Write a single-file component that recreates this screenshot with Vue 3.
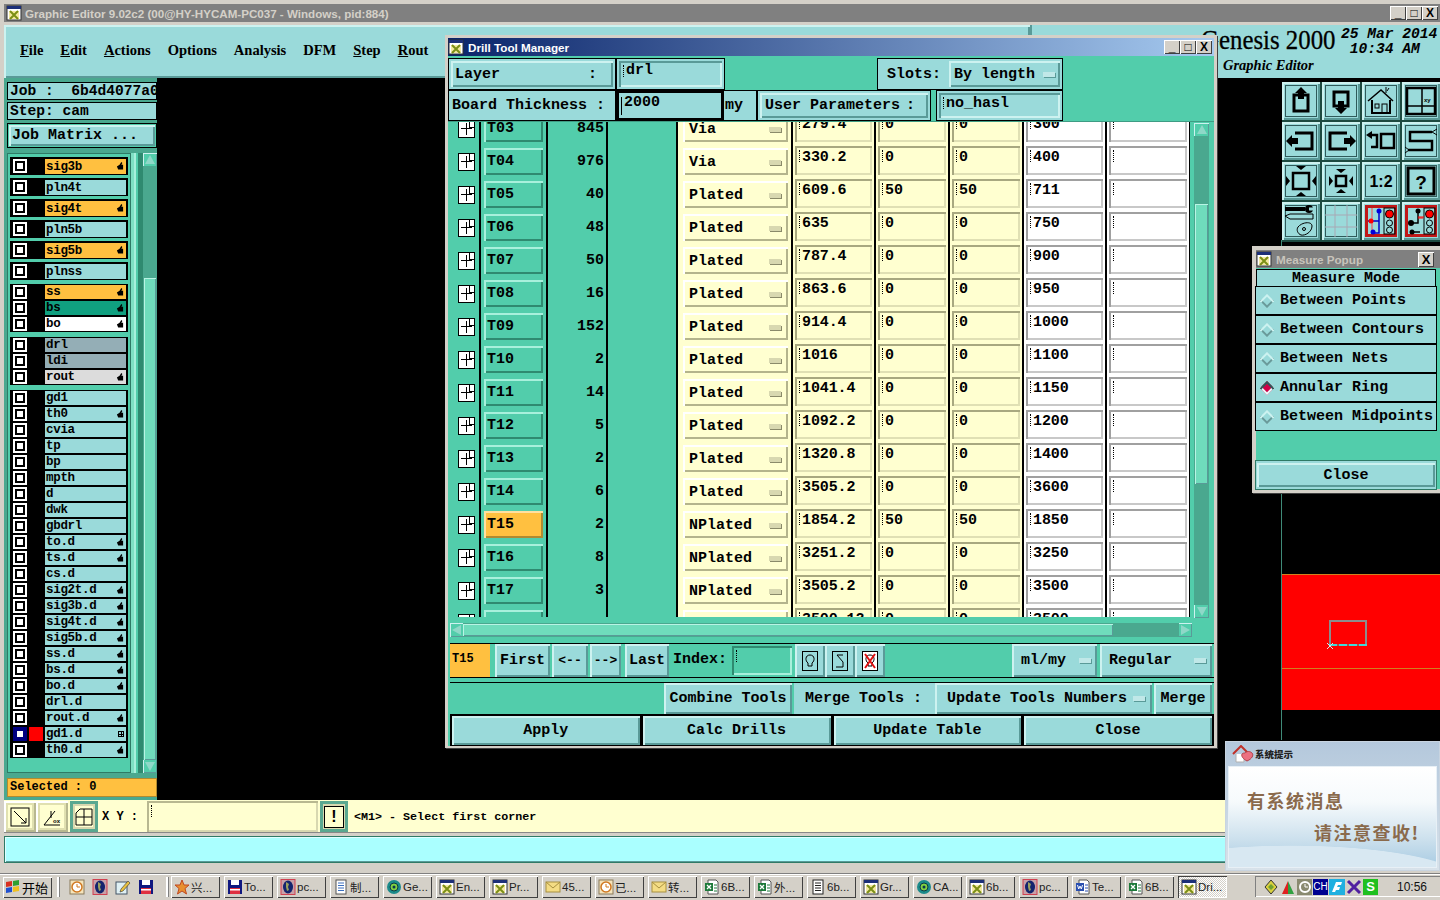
<template>
  <div class="desktop">
    <!-- icon sprite -->
    <svg class="sprite" width="0" height="0">
      <symbol id="xwin" viewBox="0 0 16 16">
        <rect x="1" y="1" width="14" height="14" fill="#fff" stroke="#333" />
        <rect x="1" y="1" width="14" height="3" fill="#1c2f78" />
        <rect x="3" y="6" width="10" height="8" fill="#f4e9a0" />
        <path d="M4 6l8 8M12 6l-8 8" stroke="#7b8f16" stroke-width="2" />
      </symbol>
      <symbol id="excel" viewBox="0 0 16 16">
        <path d="M4 1h8l2 2v12H4z" fill="#fff" stroke="#555" />
        <rect x="1" y="4" width="8" height="8" fill="#1d7a3a" />
        <path d="M3 6l4 4M7 6l-4 4" stroke="#fff" stroke-width="1.3" />
        <path d="M10 6h3M10 9h3M10 12h3" stroke="#1d7a3a" />
      </symbol>
      <symbol id="word" viewBox="0 0 16 16">
        <path d="M4 1h8l2 2v12H4z" fill="#fff" stroke="#555" />
        <rect x="1" y="4" width="8" height="8" fill="#2a4fb0" />
        <path d="M2.5 6l1.2 4 1.3-3 1.3 3 1.2-4" stroke="#fff" fill="none" />
        <path d="M10 6h3M10 9h3M10 12h3" stroke="#2a4fb0" />
      </symbol>
      <symbol id="globe" viewBox="0 0 16 16">
        <rect x="1" y="0.5" width="14" height="15" fill="#c8a0a8" stroke="#d04050" />
        <ellipse cx="8" cy="8" rx="5" ry="6.5" fill="#14246e" />
        <path d="M6 3l3 2-1 3 1 3-2 1-1-4z" fill="#9aa060" />
      </symbol>
      <symbol id="note" viewBox="0 0 16 16">
        <rect x="3" y="1" width="10" height="14" fill="#fff" stroke="#555" />
        <path d="M5 4h6M5 6.500h6M5 9h6M5 11.500h6" stroke="#3a6fc0" />
      </symbol>
      <symbol id="textfile" viewBox="0 0 16 16">
        <rect x="3" y="1" width="10" height="14" fill="#fff" stroke="#222" />
        <path d="M5 4h6M5 6.500h6M5 9h6M5 11.500h6" stroke="#222" />
      </symbol>
      <symbol id="mail" viewBox="0 0 16 16">
        <rect x="1" y="3" width="14" height="10" fill="#f4dc84" stroke="#a89040" />
        <path d="M1 3l7 6 7-6" fill="none" stroke="#a89040" />
      </symbol>
      <symbol id="clock" viewBox="0 0 16 16">
        <rect x="1" y="1" width="14" height="14" fill="#f5e4bc" stroke="#8a7a5a" />
        <circle cx="8" cy="8" r="5" fill="#fff" stroke="#d07820" stroke-width="1.500" />
        <path d="M8 5v3h3" stroke="#d07820" fill="none" />
      </symbol>
      <symbol id="floppy" viewBox="0 0 16 16">
        <rect x="1" y="1" width="14" height="14" fill="#101880" />
        <rect x="4" y="1" width="8" height="5" fill="#fff" />
        <rect x="3" y="9" width="10" height="6" fill="#e03040" />
        <rect x="3" y="10" width="10" height="1.500" fill="#fff" />
      </symbol>
      <symbol id="star" viewBox="0 0 16 16">
        <path d="M8 1l2 5h5l-4 3.500 1.500 5.500L8 12l-4.500 3L5 9.500 1 6h5z" fill="#e89030" stroke="#c04820" />
      </symbol>
      <symbol id="gear" viewBox="0 0 16 16">
        <circle cx="8" cy="8" r="7" fill="#1a8a8a" />
        <circle cx="8" cy="8" r="4" fill="#80d040" stroke="#0a3a4a" />
        <circle cx="8" cy="8" r="1.500" fill="#0a3a4a" />
      </symbol>
      <symbol id="pen" viewBox="0 0 16 16">
        <rect x="1" y="3" width="11" height="12" fill="#dff0f4" stroke="#456" />
        <path d="M6 10l7-8 2 2-7 8-3 1z" fill="#e8c040" stroke="#333" stroke-width=".6" />
      </symbol>
      <symbol id="hand" viewBox="0 0 9 9">
        <path d="M1 5l3-2 2-3 1.200 1L6 3h2v5.500H2.500z" fill="#000" />
      </symbol>
      <symbol id="p-upout" viewBox="3 3 32 32">
        <path d="M12 13h14v16H12z" fill="none" stroke="#000" stroke-width="3" />
        <path d="M19 5l6 6h-3v6h-6v-6h-3z" />
      </symbol>
      <symbol id="p-downin" viewBox="3 3 32 32">
        <path d="M12 10h14v14H12z" fill="none" stroke="#000" stroke-width="3" />
        <path d="M19 32l-6-6h3v-7h6v7h3z" />
      </symbol>
      <symbol id="p-home" viewBox="3 3 32 32">
        <path d="M6 19L19 8l12 11" fill="none" stroke="#000" stroke-width="1.500" />
        <path d="M10 18v13h18V18" fill="none" stroke="#000" stroke-width="2" />
        <rect x="13" y="22" width="4" height="4" fill="none" stroke="#000" />
        <rect x="20" y="22" width="5" height="9" fill="none" stroke="#000" />
        <path d="M24 11V5M27 6l-2 3" stroke="#000" />
      </symbol>
      <symbol id="p-xy" viewBox="3 3 32 32">
        <rect x="5" y="6" width="28" height="26" fill="none" stroke="#000" stroke-width="2.500" />
        <path d="M20 6v26M5 24h28" stroke="#000" stroke-width="1.500" />
      </symbol>
      <symbol id="p-left" viewBox="3 3 32 32">
        <path d="M13 11h17v16H13" fill="none" stroke="#000" stroke-width="3" />
        <path d="M4 19l6-6v3h6v6h-6v3z" />
      </symbol>
      <symbol id="p-right" viewBox="3 3 32 32">
        <path d="M25 11H8v16h17" fill="none" stroke="#000" stroke-width="3" />
        <path d="M34 19l-6-6v3h-6v6h6v3z" />
      </symbol>
      <symbol id="p-undo" viewBox="3 3 32 32">
        <rect x="19" y="12" width="13" height="14" fill="none" stroke="#000" stroke-width="2.500" />
        <path d="M9 13h6v12H9" fill="none" stroke="#000" stroke-width="2.500" />
        <path d="M4 13l6-4v8z" />
      </symbol>
      <symbol id="p-s" viewBox="3 3 32 32">
        <path d="M30 10H8v9h22v9H6" fill="none" stroke="#000" stroke-width="2.500" />
        <path d="M35 7l-5 3 5 3M3 25l4 3-4 3" fill="none" stroke="#000" />
      </symbol>
      <symbol id="p-fit" viewBox="3 3 32 32">
        <rect x="11" y="11" width="16" height="16" fill="none" stroke="#000" stroke-width="2.500" />
        <path d="M19 8l-5-4h10zM19 30l-5 4h10zM8 19l-4-5v10zM30 19l4-5v10z" />
      </symbol>
      <symbol id="p-zoom" viewBox="3 3 32 32">
        <rect x="14" y="14" width="10" height="10" fill="none" stroke="#000" stroke-width="2.500" />
        <path d="M19 11l-5-4h10zM19 27l-5 4h10zM11 19l-4-5v10zM27 19l4-5v10z" />
      </symbol>
      <symbol id="p-ratio" viewBox="3 3 32 32"></symbol>
      <symbol id="p-help" viewBox="3 3 32 32">
        <rect x="6" y="6" width="26" height="26" fill="none" stroke="#000" stroke-width="3" />
      </symbol>
      <symbol id="p-tool" viewBox="3 3 32 32">
        <path d="M3 6h20M3 8h20" stroke="#000" stroke-width="2" />
        <circle cx="27" cy="7" r="4" /><rect x="27" y="5.500" width="6" height="3" fill="#98d8d8" />
        <path d="M3 14l5-2h23v5H8z" fill="none" stroke="#000" />
        <path d="M16 25c4-5 14-6 14-1 0 6-7 10-11 9-3-1-5-5-3-8z" fill="none" stroke="#000" />
        <circle cx="22" cy="27" r="1.500" fill="none" stroke="#000" />
      </symbol>
      <symbol id="p-grid" viewBox="3 3 32 32">
        <path d="M3 13h32M3 25h32M13 3v32M25 3v32" stroke="#a8a8b4" />
      </symbol>
      <symbol id="p-net1" viewBox="0 0 32 32">
        <rect x="19" y="3" width="11" height="26" fill="none" stroke="#000" />
        <circle cx="24.500" cy="9" r="4" fill="#f00" stroke="#000" /><circle cx="24.500" cy="18" r="3" fill="none" stroke="#000" /><circle cx="24.500" cy="25" r="3" fill="none" stroke="#000" />
        <path d="M14 4v24H8M3 16h11" stroke="#00c" stroke-width="1.500" fill="none" /><path d="M7 3v26" stroke="#f44" />
        <circle cx="14" cy="6" r="2.500" fill="#00d" /><circle cx="8" cy="27" r="2.500" fill="#00d" /><circle cx="6" cy="16" r="2.500" fill="#f00" />
      </symbol>
      <symbol id="p-net2" viewBox="0 0 32 32">
        <rect x="19" y="3" width="11" height="26" fill="none" stroke="#000" />
        <circle cx="24.500" cy="9" r="4" fill="#f00" stroke="#000" /><circle cx="24.500" cy="18" r="3" fill="none" stroke="#000" /><circle cx="24.500" cy="25" r="3" fill="none" stroke="#000" />
        <path d="M13 4v14H7M7 27h8" stroke="#000" stroke-width="1.500" fill="none" /><path d="M13 13h5M14 11v2M16 11v2M18 11v2" stroke="#f00" />
        <circle cx="13" cy="6" r="2.500" /><circle cx="6" cy="18" r="3" /><circle cx="7" cy="27" r="2.500" />
      </symbol>
    </svg>

    <div class="frame">
      <div class="main-title">
        <svg class="ico16"><use href="#xwin" /></svg>
        <span>Graphic Editor 9.02c2 (00@HY-HYCAM-PC037 - Windows, pid:884)</span>
        <div class="win-btns">
          <span class="win-btn">_</span><span class="win-btn">□</span><span class="win-btn">X</span>
        </div>
      </div>

      <div class="top-band">
        <div class="menu-bar">
          <span v-for="m in menus" :key="m.label" class="menu-item" :class="{ u: m.u }">{{ m.label }}</span>
        </div>
        <div class="brand">
          <div class="brand-top">
            <span class="brand-name">Genesis 2000</span>
            <span class="brand-date">25 Mar 2014<br />&nbsp;10:34 AM</span>
          </div>
          <div class="brand-sub">Graphic Editor</div>
        </div>
      </div>

      <div class="middle">
        <aside class="left-panel">
          <div class="info-row">Job :&nbsp;&nbsp;6b4d4077a0</div>
          <div class="info-row">Step: cam</div>
          <div class="matrix-box"><div class="btn matrix-btn">Job Matrix ...</div></div>
          <div class="list-wrap">
            <div class="layer-list">
              <div v-for="(group, gi) in layerGroups" :key="gi" class="layer-group" :class="{ spaced: group.spaced, 'after-spaced': group.first }">
                <div v-for="l in group.rows" :key="l.name" class="layer-row">
                  <span class="check" :class="{ active: l.active }"></span>
                  <span class="swatch" :class="{ on: l.active }"></span>
                  <span class="layer-label" :class="l.tone">
                    {{ l.name }}
                    <svg v-if="l.hand" class="hand"><use href="#hand" /></svg>
                    <span v-if="l.grid" class="mini-grid"></span>
                  </span>
                </div>
              </div>
            </div>
            <div class="list-strip"></div>
            <div class="vscroll list-scroll">
              <span class="arrow-up"></span>
              <span class="vtrack"><span class="vthumb list-thumb"></span></span>
              <span class="arrow-down"></span>
            </div>
          </div>
          <div class="selected">Selected : 0</div>
        </aside>

        <main class="canvas">
          <div class="palette">
            <div v-for="p in palette" :key="p.id" class="pal-btn">
              <span class="pal-inner" :class="{ red: p.red }">
                <svg class="pal-ico" viewBox="0 0 32 32">
                  <use :href="'#' + p.id" />
                  <text v-if="p.text" :x="p.x" :y="p.y" :font-size="p.size" :text-anchor="p.anchor" class="pal-text">{{ p.text }}</text>
                </svg>
              </span>
            </div>
          </div>
          <div class="board-line"></div>
          <div class="board">
            <div class="board-mark"></div>
            <div class="board-cut"></div>
            <svg class="board-x" width="8" height="8" viewBox="0 0 8 8"><path d="M1 1l6 6M7 1L1 7" stroke="#d8e8e8" /></svg>
          </div>
        </main>
      </div>

      <div class="xy-bar">
        <span class="xy-btn">
          <svg width="20" height="20" viewBox="0 0 20 20"><rect x="1" y="1" width="18" height="18" fill="none" stroke="#000" /><path d="M4 4l12 12M16 11v5h-5" fill="none" stroke="#000" /></svg>
        </span>
        <span class="xy-btn">
          <svg width="20" height="20" viewBox="0 0 20 20"><path d="M2 18L13 4M2 18h16M9 4v7" fill="none" stroke="#000" /><text x="11" y="16" font-size="6" font-family="Liberation Sans, sans-serif">ox</text></svg>
        </span>
        <span class="xy-btn teal-frame">
          <svg width="18" height="18" viewBox="0 0 18 18"><path d="M1 17V5l4-4h12v16zM9 1v16M1 9h16" fill="none" stroke="#000" /></svg>
        </span>
        <span class="xy-label">X Y :</span>
        <span class="xy-input"><i class="caret"></i></span>
        <span class="xy-btn teal-frame bang"><span class="bang-box">!</span></span>
        <span class="xy-msg">&lt;M1&gt; - Select first corner</span>
      </div>
      <div class="msg-bar"></div>
    </div>

    <div class="taskbar">
      <div class="start-btn">
        <svg width="16" height="16" viewBox="0 0 16 16"><path d="M1 3l6-1v5l-6 1z" fill="#d83020" /><path d="M8 2l6-1v5l-6 1z" fill="#30a030" /><path d="M1 9l6-1v5l-6 1z" fill="#2050d0" /><path d="M8 8l6-1v5l-6 1z" fill="#f0c020" /></svg>
        <span>开始</span>
      </div>
      <span class="grip"></span>
      <div class="quick">
        <svg class="ico16"><use href="#clock" /></svg>
        <svg class="ico16"><use href="#globe" /></svg>
        <svg class="ico16"><use href="#pen" /></svg>
        <svg class="ico16"><use href="#floppy" /></svg>
      </div>
      <span class="grip"></span>
      <div class="tasks">
        <div v-for="(t, i) in tasks" :key="i" class="task" :class="{ current: t.current }">
          <svg class="ico16"><use :href="'#' + t.icon" /></svg>
          <span>{{ t.label }}</span>
        </div>
      </div>
      <div class="tray">
        <svg class="tray-ico" viewBox="0 0 16 16"><path d="M8 1l6 7-6 7-6-7z" fill="#d8d040" stroke="#333" /><path d="M5 8l3-3 3 3-3 3z" fill="#70a030" /></svg>
        <svg class="tray-ico" viewBox="0 0 16 16"><path d="M8 2L2 15h6z" fill="#e02020" /><path d="M8 2l6 13H8z" fill="#30a040" /></svg>
        <span class="tray-box grey">
          <svg width="14" height="14" viewBox="0 0 14 14"><circle cx="7" cy="7" r="5" fill="none" stroke="#fff" stroke-width="2" /><path d="M7 4v3h3" stroke="#fff" fill="none" /></svg>
        </span>
        <span class="tray-box ch">CH</span>
        <svg class="tray-ico" viewBox="0 0 16 16"><rect width="16" height="16" fill="#20b0e0" /><path d="M3 13l4-10h6l-1 3H9l-1 2h3l-1 3H7l-1 2z" fill="#fff" /></svg>
        <svg class="tray-ico" viewBox="0 0 16 16"><path d="M2 2l12 12M14 2L2 14" stroke="#5020a0" stroke-width="3" /></svg>
        <span class="tray-box tray-s">S</span>
        <span class="clock">10:56</span>
      </div>
    </div>

    <!-- Drill Tool Manager -->
    <section class="win drill">
      <header class="win-title active-title">
        <svg class="ico16"><use href="#xwin" /></svg>
        <span>Drill Tool Manager</span>
        <div class="win-btns">
          <span class="win-btn">_</span><span class="win-btn">□</span><span class="win-btn">X</span>
        </div>
      </header>
      <div class="drill-body">
        <div class="d-row r1">
          <div class="boxed layer-btn"><span class="btn layer-inner"><b>Layer</b><b>:</b></span></div>
          <div class="boxed layer-field"><span class="field"><i class="caret"></i>drl</span></div>
          <div class="boxed slots">
            <span class="slots-lbl">Slots:</span>
            <span class="btn sel slots-sel">By length<i class="ind"></i></span>
          </div>
        </div>
        <div class="d-row r2">
          <div class="boxed board-lbl">Board Thickness :</div>
          <div class="boxed thick-field"><span class="field focused"><i class="caret big"></i>2000</span></div>
          <div class="boxed my">my</div>
          <div class="boxed user-wrap"><span class="btn user-btn"><b>User Parameters</b><b>:</b></span></div>
          <div class="boxed user-field"><span class="field"><i class="caret"></i>no_hasl</span></div>
        </div>

        <div class="table-area">
          <div class="table-clip">
            <div class="tool-table">
              <div v-for="r in tools" :key="r.dia" class="tool-row">
                <div class="c-ico">
                  <span class="plus-box"></span>
                </div>
                <div class="c-id"><span class="id-btn" :class="{ hot: r.id === 'T15' }">{{ r.id }}</span></div>
                <div class="c-count">{{ r.count }}</div>
                <div class="c-empty"></div>
                <div class="c-type"><span class="type-btn">{{ r.type }}<i class="ind"></i></span></div>
                <div class="c-in cream"><span class="in-box"><i class="caret"></i>{{ r.dia }}</span></div>
                <div class="c-in cream"><span class="in-box"><i class="caret"></i>{{ r.a }}</span></div>
                <div class="c-in cream"><span class="in-box"><i class="caret"></i>{{ r.b }}</span></div>
                <div class="c-in white-cell"><span class="in-box"><i class="caret"></i>{{ r.fin }}</span></div>
                <div class="c-in white-cell"><span class="in-box"><i class="caret"></i></span></div>
              </div>
            </div>
          </div>
          <div class="vscroll table-scroll">
            <span class="arrow-up"></span>
            <span class="vtrack"><span class="vthumb table-thumb"></span></span>
            <span class="arrow-down"></span>
          </div>
        </div>

        <div class="hscroll">
          <span class="arrow-left"></span>
          <span class="htrack"><span class="hthumb"></span></span>
          <span class="arrow-right"></span>
        </div>

        <div class="nav-row">
          <span class="cur-tool">T15</span>
          <span class="btn nav-first">First</span>
          <span class="btn nav-arrow">&lt;--</span>
          <span class="btn nav-arrow2">--&gt;</span>
          <span class="btn nav-last">Last</span>
          <span class="index-lbl">Index:</span>
          <span class="index-in"><i class="caret"></i></span>
          <span class="btn nav-ico">
            <svg width="16" height="20" viewBox="0 0 16 20"><rect x=".5" y=".5" width="15" height="19" fill="none" stroke="#000" /><path d="M6 15V12C3 10 3 4 8 4s5 6 2 8v3z" fill="none" stroke="#000" /></svg>
          </span>
          <span class="btn nav-ico">
            <svg width="16" height="20" viewBox="0 0 16 20"><rect x=".5" y=".5" width="15" height="19" fill="none" stroke="#000" /><path d="M11 4H5l6 7v5H4" fill="none" stroke="#000" /></svg>
          </span>
          <span class="btn nav-ico">
            <svg width="16" height="20" viewBox="0 0 16 20"><rect x=".5" y=".5" width="15" height="19" fill="#fff" stroke="#000" /><path d="M6 15V12C3 10 3 4 8 4s5 6 2 8v3z" fill="none" stroke="#000" /><path d="M3 3l10 14M13 3L3 17" stroke="#e01010" stroke-width="2" /></svg>
          </span>
          <span class="nav-gap"></span>
          <span class="btn sel nav-unit">ml/my<i class="ind"></i></span>
          <span class="btn sel nav-reg">Regular<i class="ind"></i></span>
        </div>

        <div class="merge-row">
          <span class="merge-gap"></span>
          <span class="btn combine">Combine Tools</span>
          <span class="merge-lbl">Merge Tools :</span>
          <span class="btn sel merge-sel">Update Tools Numbers<i class="ind"></i></span>
          <span class="btn merge-btn">Merge</span>
        </div>

        <div class="action-row">
          <span v-for="a in actions" :key="a" class="btn action">{{ a }}</span>
        </div>
      </div>
    </section>

    <!-- Measure popup -->
    <section class="win measure">
      <header class="win-title idle-title">
        <svg class="ico16"><use href="#xwin" /></svg>
        <span>Measure Popup</span>
        <div class="win-btns"><span class="win-btn">X</span></div>
      </header>
      <div class="measure-body">
        <div class="mode-head">Measure Mode</div>
        <div v-for="m in modes" :key="m.label" class="mode-row">
          <i class="diamond" :class="{ on: m.on }"></i>{{ m.label }}
        </div>
        <div class="mode-gap"></div>
        <div class="mode-close"><span class="btn">Close</span></div>
      </div>
    </section>

    <!-- system notice -->
    <section class="notice">
      <div class="notice-head">
        <svg width="22" height="18" viewBox="0 0 22 18"><path d="M1 9l8-8 8 8" fill="none" stroke="#c03028" stroke-width="2" /><path d="M4 9v8h8V9" fill="#fff" stroke="#b0b0b0" /><path d="M13 8c2-2 5-2 7 0s0 6-5 8c-4-2-6-5-5-7 1-1 2-1 3-1z" fill="#ec7080" stroke="#b04048" /></svg>
        <span>系统提示</span>
      </div>
      <div class="notice-body">
        <div class="notice-l1">有系统消息</div>
        <div class="notice-l2">请注意查收!</div>
      </div>
    </section>
  </div>
</template>

<script setup>
// u = first letter underlined, as the mnemonic in the original menu
const menus = [
  { label: 'File', u: true }, { label: 'Edit', u: true }, { label: 'Actions', u: true },
  { label: 'Options' }, { label: 'Analysis' }, { label: 'DFM' },
  { label: 'Step', u: true }, { label: 'Rout', u: true }, { label: 'View', u: true },
]

// layer matrix column: tone is the label colour, hand the little pointer at the right
const mk = (name, tone = '', hand = false, extra = {}) => ({ name, tone, hand, ...extra })
const layerGroups = [
  { spaced: true, rows: [mk('sig3b', 'orange', true)] },
  { spaced: true, rows: [mk('pln4t')] },
  { spaced: true, rows: [mk('sig4t', 'orange', true)] },
  { spaced: true, rows: [mk('pln5b')] },
  { spaced: true, rows: [mk('sig5b', 'orange', true)] },
  { spaced: true, rows: [mk('plnss')] },
  { first: true, rows: [mk('ss', 'orange', true), mk('bs', 'green', true), mk('bo', 'white', true)] },
  { rows: [mk('drl', 'slate'), mk('ldi', 'slate'), mk('rout', 'pale', true)] },
  {
    rows: [
      mk('gd1'), mk('th0', '', true), mk('cvia'), mk('tp'), mk('bp'), mk('mpth'), mk('d'), mk('dwk'), mk('gbdrl'),
      mk('to.d', '', true), mk('ts.d', '', true), mk('cs.d'), mk('sig2t.d', '', true), mk('sig3b.d', '', true),
      mk('sig4t.d', '', true), mk('sig5b.d', '', true), mk('ss.d', '', true), mk('bs.d', '', true), mk('bo.d', '', true),
      mk('drl.d'), mk('rout.d', '', true), mk('gd1.d', '', false, { active: true, grid: true }), mk('th0.d', '', true),
    ],
  },
]

const palette = [
  { id: 'p-upout' }, { id: 'p-downin' }, { id: 'p-home' },
  { id: 'p-xy', text: 'xy', x: 19, y: 17, size: 6 },
  { id: 'p-left' }, { id: 'p-right' }, { id: 'p-undo' }, { id: 'p-s' },
  { id: 'p-fit' }, { id: 'p-zoom' },
  { id: 'p-ratio', text: '1:2', x: 16, y: 22, size: 16, anchor: 'middle' },
  { id: 'p-help', text: '?', x: 16, y: 24, size: 19, anchor: 'middle' },
  { id: 'p-tool' }, { id: 'p-grid' }, { id: 'p-net1', red: true }, { id: 'p-net2', red: true },
]

const row = (id, count, type, dia, fin, a = '0', b = '0') => ({ id, count, type, dia, fin, a, b })
const tools = [
  row('T03', 845, 'Via', '279.4', '300'),
  row('T04', 976, 'Via', '330.2', '400'),
  row('T05', 40, 'Plated', '609.6', '711', '50', '50'),
  row('T06', 48, 'Plated', '635', '750'),
  row('T07', 50, 'Plated', '787.4', '900'),
  row('T08', 16, 'Plated', '863.6', '950'),
  row('T09', 152, 'Plated', '914.4', '1000'),
  row('T10', 2, 'Plated', '1016', '1100'),
  row('T11', 14, 'Plated', '1041.4', '1150'),
  row('T12', 5, 'Plated', '1092.2', '1200'),
  row('T13', 2, 'Plated', '1320.8', '1400'),
  row('T14', 6, 'Plated', '3505.2', '3600'),
  row('T15', 2, 'NPlated', '1854.2', '1850', '50', '50'),
  row('T16', 8, 'NPlated', '3251.2', '3250'),
  row('T17', 3, 'NPlated', '3505.2 ', '3500'),
  row('', '', '', '3500.12', '3500'),
]

const actions = ['Apply', 'Calc Drills', 'Update Table', 'Close']

const modes = [
  { label: 'Between Points' },
  { label: 'Between Contours' },
  { label: 'Between Nets' },
  { label: 'Annular Ring', on: true },
  { label: 'Between Midpoints' },
]

const tasks = [
  { icon: 'star', label: '兴...' }, { icon: 'floppy', label: 'To...' }, { icon: 'globe', label: 'pc...' },
  { icon: 'note', label: '制...' }, { icon: 'gear', label: 'Ge...' }, { icon: 'xwin', label: 'En...' },
  { icon: 'xwin', label: 'Pr...' }, { icon: 'mail', label: '45...' }, { icon: 'clock', label: '已...' },
  { icon: 'mail', label: '转...' }, { icon: 'excel', label: '6B...' }, { icon: 'excel', label: '外...' },
  { icon: 'textfile', label: '6b...' }, { icon: 'xwin', label: 'Gr...' }, { icon: 'gear', label: 'CA...' },
  { icon: 'xwin', label: '6b...' }, { icon: 'globe', label: 'pc...' }, { icon: 'word', label: 'Te...' },
  { icon: 'excel', label: '6B...' }, { icon: 'xwin', label: 'Dri...', current: true },
]
</script>

<style>
html, body { margin: 0; background: #000; }
</style>

<style scoped>
.desktop {
  --teal: #9adada;
  --green: #52cdab;
  --dark: #4aa88f;
  --hi: #cdf2f0;
  --lo: #5a9a98;
  --cream: #ffffd0;
  --orange: #ffc040;
  --mono: "Liberation Mono", "DejaVu Sans Mono", monospace;
  --serif: "Liberation Serif", serif;
  --ui: "Liberation Sans", "Noto Sans CJK SC", sans-serif;
  position: relative;
  width: 1440px;
  height: 900px;
  overflow: hidden;
  display: flex;
  flex-direction: column;
  background: #d4d0c8;
  font-family: var(--mono);
  font-weight: 700;
  color: #000;
}
.sprite { position: absolute; }
.ico16 { width: 16px; height: 16px; flex: none; }

.frame {
  height: 874px;
  box-sizing: border-box;
  padding: 4px 0 10px 4px;
  display: flex;
  flex-direction: column;
  background: #d4d0c8;
  border-bottom: 1px solid #808080;
}

.main-title {
  height: 18px;
  display: flex;
  align-items: center;
  gap: 3px;
  padding-left: 2px;
  background: #808080;
  color: #d4d0c8;
  font: 700 11.600px var(--ui);
  margin-bottom: 3px;
}
.win-btns { margin-left: auto; display: flex; padding-right: 2px; }
.win-btn {
  width: 16px;
  height: 14px;
  background: #d4d0c8;
  color: #000;
  font: 700 12px/14px var(--ui);
  text-align: center;
  box-shadow: inset 1px 1px 0 #fff, inset -1px -1px 0 #404040;
}

.top-band {
  height: 53px;
  display: flex;
  background: var(--teal);
}
.menu-bar {
  width: 1026px;
  box-sizing: border-box;
  display: flex;
  gap: 17px;
  padding: 15px 0 0 16px;
  box-shadow: inset 2px 2px 0 var(--hi), inset -2px -2px 0 var(--lo);
  overflow: hidden;
}
.menu-item {
  font: 700 14.500px var(--serif);
  line-height: 20px;
  height: 20px;
}
.menu-item.u::first-letter { text-decoration: underline; }
.brand {
  flex: 1;
  border-left: 2px solid var(--lo);
  padding: 2px 0 0 173px;
  white-space: nowrap;
}
.brand-top { display: flex; gap: 9px; margin-left: -4px; }
.brand-name {
  font: 400 27px/27px var(--serif);
  -webkit-text-stroke: .3px #000;
  transform: scaleX(.92);
  transform-origin: left;
  width: 131px;
}
.brand-date { font: italic 700 14.600px/15px var(--mono); }
.brand-sub { font: italic 700 14.500px/18px var(--serif); margin: -1px 0 0 18px; }

.middle { flex: 1; display: flex; min-height: 0; }
.left-panel {
  width: 153px;
  box-sizing: border-box;
  padding: 4px 0 0 3px;
  background: var(--dark);
  display: flex;
  flex-direction: column;
}
.info-row {
  height: 18px;
  box-sizing: border-box;
  border: 1px solid #000;
  background: var(--teal);
  font-size: 14.600px;
  line-height: 17px;
  padding-left: 2px;
  white-space: nowrap;
  margin-bottom: 2px;
}
.matrix-box {
  height: 25px;
  box-sizing: border-box;
  margin-top: 1px;
  border: 1px solid #000;
  padding: 1px;
  background: var(--green);
}
.btn {
  display: flex;
  align-items: center;
  justify-content: center;
  box-sizing: border-box;
  background: var(--teal);
  box-shadow: inset 2px 2px 0 var(--hi), inset -2px -2px 0 var(--lo);
  font-size: 15px;
  white-space: nowrap;
}
.matrix-btn { height: 21px; justify-content: flex-start; padding-left: 3px; }

.list-wrap { flex: 1; display: flex; margin-top: 5px; min-height: 0; background: var(--green); }
.layer-list {
  width: 124px;
  box-sizing: border-box;
  padding: 4px 3px 0 3px;
  display: flex;
  flex-direction: column;
  gap: 5px;
  background: var(--green);
  box-shadow: inset 0 0 0 1px #2f7a66;
}
.layer-group.spaced { margin-bottom: -2px; }
.layer-group.after-spaced { margin-top: 1px; }
.layer-group { background: #000; }
.layer-row {
  height: 16px;
  display: flex;
  align-items: center;
  padding: 0 2px 0 3px;
}
.spaced .layer-row { height: 18px; }
.check {
  position: relative;
  width: 14px;
  height: 14px;
  flex: none;
  background: #fff;
}
.check::after {
  content: "";
  position: absolute;
  inset: 2px;
  border: 2px solid #000;
  background: #fff;
}
.check.active { outline: 2px solid #000080; outline-offset: -2px; }
.check.active::after { border-color: #000080; }
.swatch { width: 14px; height: 14px; margin: 0 2px 0 2px; flex: none; }
.swatch.on { background: #f00; }
.layer-label {
  position: relative;
  width: 81px;
  height: 14px;
  box-sizing: border-box;
  padding-left: 1px;
  background: var(--teal);
  font-size: 12.500px;
  line-height: 15px;
  letter-spacing: -.3px;
}
.spaced .layer-label { height: 15px; line-height: 17px; }
.orange { background: var(--orange); }
.green { background: #10a080; }
.white { background: #fff; }
.slate { background: #94aeb6; }
.pale { background: #dcdcdc; }
.hand { position: absolute; right: 2px; top: 3px; width: 8px; height: 8px; }
.mini-grid {
  position: absolute;
  right: 2px;
  top: 4px;
  width: 6px;
  height: 6px;
  border: 1px solid #000;
  background: linear-gradient(#000, #000) center / 100% 1px no-repeat, linear-gradient(#000, #000) center / 1px 100% no-repeat;
  box-sizing: border-box;
}
.list-strip {
  width: 12px;
  background: linear-gradient(90deg, #7fe0c4 0 3px, #a8f0dc 3px 5px, #52cdab 5px 7px, #2f8a70 7px 12px);
}

.vscroll {
  display: flex;
  flex-direction: column;
  align-items: center;
  background: var(--green);
  box-shadow: inset 1px 1px 0 var(--hi), inset -1px -1px 0 var(--lo);
}
.list-scroll { width: 14px; }
.vtrack { flex: 1; width: 100%; background: var(--dark); position: relative; }
.vthumb {
  position: absolute;
  left: 1px;
  right: 1px;
  background: #6fdcbc;
  box-shadow: inset 1px 1px 0 #b8f4e4, inset -1px -1px 0 var(--lo);
}
.list-thumb { top: 112px; bottom: 0; }
.table-thumb { top: 68px; height: 280px; }
.arrow-up, .arrow-down, .arrow-left, .arrow-right { width: 0; height: 0; flex: none; margin: 2px; border-style: solid; border-color: transparent; }
.arrow-up { border-width: 0 5px 9px; border-bottom-color: #8fd8c8; }
.arrow-down { border-width: 9px 5px 0; border-top-color: #8fd8c8; }
.arrow-left { border-width: 5px 9px 5px 0; border-right-color: #8fd8c8; }
.arrow-right { border-width: 5px 0 5px 9px; border-left-color: #8fd8c8; }

.selected {
  height: 19px;
  margin: 5px 0 3px;
  padding-left: 3px;
  background: var(--orange);
  font-size: 12px;
  line-height: 18px;
  box-shadow: inset 0 0 0 1px #b08a30;
}

.canvas { flex: 1; position: relative; background: #000; }
.palette {
  position: absolute;
  right: 0;
  top: 4px;
  width: 158px;
  display: grid;
  grid-template-columns: repeat(4, 38px);
  grid-auto-rows: 38px;
  gap: 2px;
  padding: 0 0 2px 0;
  background: #1d4a40;
}
.pal-btn {
  display: flex;
  padding: 3px;
  box-sizing: border-box;
  background: var(--teal);
  box-shadow: inset 2px 2px 0 var(--hi), inset -2px -2px 0 var(--lo);
}
.pal-inner { flex: 1; display: flex; box-shadow: inset 1px 1px 0 #2f5a5a, inset -1px -1px 0 #2f5a5a; }
.pal-inner.red { box-shadow: inset 0 0 0 3px #c01818; }
.pal-ico { width: 100%; height: 100%; }
.pal-text { font-family: "Liberation Sans", sans-serif; font-weight: 700; }
.board-line {
  position: absolute;
  left: 1124px;
  top: 162px;
  width: 1px;
  height: 500px;
  background: #3f8a78;
}
.board {
  position: absolute;
  left: 1125px;
  top: 496px;
  width: 158px;
  height: 136px;
  background: #f00;
  border-top: 1px solid #d08020;
  box-sizing: border-box;
}
.board::after {
  content: "";
  position: absolute;
  left: 0;
  right: 0;
  top: 93px;
  height: 1px;
  background: #d08020;
}
.board-mark {
  position: absolute;
  left: 47px;
  top: 45px;
  width: 38px;
  height: 25px;
  box-sizing: border-box;
  border: 2px solid #8c8c8c;
  border-bottom: 0;
}
.board-cut {
  position: absolute;
  left: 47px;
  top: 69px;
  width: 38px;
  height: 2px;
  background: repeating-linear-gradient(90deg, #40d8d8 0 8px, #a05050 8px 10px);
}
.board-x { position: absolute; left: 44px; top: 67px; }

.xy-bar {
  height: 33px;
  box-sizing: border-box;
  padding-top: 1px;
  display: flex;
  align-items: stretch;
  background: var(--cream);
  border-bottom: 1px solid #888;
}
.xy-btn {
  width: 32px;
  display: flex;
  align-items: center;
  justify-content: center;
  background: var(--cream);
  box-shadow: inset 2px 2px 0 #fff, inset -2px -2px 0 #b8b890, inset 0 0 0 4px #e0e0b0;
}
.teal-frame { box-shadow: inset 0 0 0 3px #5aa890, inset 0 0 0 5px #d8d8b0; width: 28px; margin-left: 2px; }
.xy-label { width: 49px; padding-left: 4px; box-sizing: border-box; font-size: 12px; line-height: 32px; }
.xy-input {
  width: 171px;
  position: relative;
  box-shadow: inset 2px 2px 0 #b8b890, inset -2px -2px 0 #d8d8b0;
}
.bang-box { display: block; width: 18px; height: 20px; border: 1px solid #000; background: var(--cream); text-align: center; font: 700 16px/20px var(--ui); }
.xy-msg { padding-left: 6px; font-size: 11.700px; line-height: 32px; }

.msg-bar {
  height: 27px;
  margin-top: 3px;
  background: #aaffff;
  box-shadow: inset 0 0 0 1px #2f7a66, inset 2px 2px 0 #e0ffff, inset -2px -2px 0 #5a9a98;
}

.taskbar {
  flex: 1;
  display: flex;
  align-items: center;
  background: #d4d0c8;
  box-shadow: inset 0 1px 0 #fff;
  font: 400 12px var(--ui);
}
.start-btn {
  width: 49px;
  height: 21px;
  margin-left: 3px;
  box-sizing: border-box;
  display: flex;
  align-items: center;
  gap: 1px;
  padding-left: 2px;
  font-size: 13px;
  box-shadow: inset 1px 1px 0 #fff, inset -1px -1px 0 #404040;
}
.grip { width: 2px; height: 20px; margin: 0 5px; background: #fff; border-right: 1px solid #808080; }
.quick { display: flex; gap: 7px; padding: 0 0 0 4px; width: 96px; box-sizing: border-box; }
.tasks { display: flex; gap: 4px; width: 1062px; margin-left: -3px; }
.task {
  width: 49px;
  height: 22px;
  box-sizing: border-box;
  display: flex;
  align-items: center;
  gap: 1px;
  padding-left: 3px;
  overflow: hidden;
  white-space: nowrap;
  font-size: 11.500px;
  color: #222;
  box-shadow: inset 1px 1px 0 #fff, inset -1px -1px 0 #404040;
}
.task.current {
  box-shadow: inset 1px 1px 0 #404040, inset -1px -1px 0 #fff;
  background: repeating-conic-gradient(#fff 0 25%, #d4d0c8 0 50%) 0 0 / 2px 2px;
}
.tray {
  position: absolute;
  left: 1255px;
  right: 0;
  bottom: 3px;
  height: 21px;
  display: flex;
  align-items: center;
  gap: 1px;
  padding-left: 8px;
  box-shadow: inset 1px 1px 0 #808080, inset 0 -1px 0 #fff;
}
.tray-ico { width: 16px; height: 16px; flex: none; }
.tray-box {
  width: 15px;
  height: 16px;
  flex: none;
  display: flex;
  align-items: center;
  justify-content: center;
  color: #fff;
  font-size: 10px;
}
.grey { background: #8a8a70; }
.ch { background: #000090; }
.tray-s { background: #20c020; font-weight: 700; font-size: 13px; }
.clock { margin-left: 18px; font-size: 12px; color: #111; }

.win {
  position: absolute;
  box-sizing: border-box;
  background: #d4d0c8;
  border: 3px solid #d4d0c8;
  box-shadow: inset 0 0 0 1px #fff, 1px 1px 0 #404040;
  display: flex;
  flex-direction: column;
}
.win-title {
  height: 18px;
  flex: none;
  display: flex;
  align-items: center;
  gap: 4px;
  font: 700 11.700px var(--ui);
  color: #fff;
}
.active-title { background: linear-gradient(90deg, #0a246a, #a6caf0); }
.idle-title { background: #808080; color: #c8c4bc; }

.drill { left: 445px; top: 35px; width: 772px; height: 713px; }
.drill-body { flex: 1; background: var(--green); padding-top: 2px; display: flex; flex-direction: column; }
.d-row { display: flex; }
.boxed {
  box-sizing: border-box;
  border: 1px solid #000;
  background: var(--teal);
  display: flex;
  align-items: center;
}
.r1 { height: 32px; }
.r2 { height: 31px; }
.layer-btn { width: 168px; padding: 2px; background: var(--teal); }
.layer-inner { flex: 1; height: 100%; justify-content: space-between; padding: 0 16px 0 4px; }
.layer-inner b { font-weight: 700; }
.layer-field { width: 109px; padding: 2px; }
.field {
  position: relative;
  flex: 1;
  height: 100%;
  box-sizing: border-box;
  padding-left: 7px;
  background: var(--teal);
  box-shadow: inset 2px 2px 0 var(--lo), inset -2px -2px 0 var(--hi);
  font-size: 15px;
  line-height: 19px;
}
.r2 .field { line-height: 22px; }
.r2 .field.focused { box-shadow: inset 0 0 0 2px #000; line-height: 23px; }
.slots { width: 186px; margin-left: 152px; padding: 2px 2px 2px 9px; }
.slots-lbl { font-size: 15px; width: 62px; flex: none; }
.sel { justify-content: space-between; }
.slots-sel { flex: 1; height: 100%; padding: 0 5px 0 5px; }
.ind {
  display: block;
  width: 12px;
  height: 5px;
  flex: none;
  background: #c0e8e8;
  box-shadow: 1px 1px 0 var(--lo);
}
.board-lbl { width: 168px; font-size: 15px; padding-left: 3px; white-space: nowrap; }
.thick-field { width: 108px; padding: 0; }
.my { width: 34px; margin-left: -1px; padding-left: 1px; font-size: 15px; }
.user-wrap { width: 174px; padding: 2px; }
.user-btn { flex: 1; height: 100%; justify-content: space-between; padding: 0 13px 0 5px; }
.user-btn b { font-weight: 700; }
.user-field { width: 127px; padding: 2px; margin-left: 5px; }

.table-area { height: 500px; display: flex; padding-left: 5px; box-shadow: inset 0 1px 0 #3f9c84; }
.table-clip { width: 737px; height: 495px; margin-top: 1px; overflow: hidden; background: #000; }
.tool-table { margin-top: -10px; display: flex; flex-direction: column; gap: 2px; }
.tool-row {
  height: 31px;
  display: grid;
  grid-template-columns: 26px 65px 58px 68px 113px 81px 72px 72px 81px 82px;
  gap: 2px;
  font-size: 15px;
}
.c-ico, .c-id, .c-count, .c-empty { background: var(--green); }
.c-ico { display: flex; align-items: center; justify-content: center; }
.plus-box {
  position: relative;
  width: 17px;
  height: 18px;
  box-sizing: border-box;
  border: 1px solid #000;
  background:
    linear-gradient(#000, #000) center / 11px 1px no-repeat,
    linear-gradient(#000, #000) center / 1px 12px no-repeat,
    #fff;
}
.plus-box::after {
  content: "";
  position: absolute;
  right: -1px;
  top: -1px;
  width: 4px;
  height: 6px;
  border: 1px solid #000;
  background: #fff;
}
.c-id { padding: 3px; display: flex; }
.id-btn {
  flex: 1;
  padding-left: 3px;
  background: var(--green);
  box-shadow: inset 2px 2px 0 #a8f0dc, inset -2px -2px 0 #2f8a70;
  line-height: 27px;
}
.id-btn.hot { background: var(--orange); box-shadow: inset 2px 2px 0 #ffe0a0, inset -2px -2px 0 #b08a30; }
.c-count { text-align: right; padding-right: 2px; line-height: 33px; }
.c-type { background: var(--cream); padding: 3px 3px 3px 5px; display: flex; }
.type-btn {
  flex: 1;
  display: flex;
  align-items: center;
  justify-content: space-between;
  padding: 2px 7px 0 6px;
  background: var(--cream);
  box-shadow: inset 2px 2px 0 #fff, inset -2px -2px 0 #b4b48c;
}
.type-btn .ind { background: #d8d8b0; box-shadow: 1px 1px 0 #8a8a6a; }
.c-in { padding: 1px 2px 3px 2px; display: flex; }
.cream { background: var(--cream); }
.white-cell { background: #fff; }
.in-box {
  position: relative;
  flex: 1;
  padding-left: 7px;
  line-height: 24px;
  letter-spacing: -.1px;
  box-shadow: inset 2px 2px 0 #a8a880, inset -2px -2px 0 #e0e0b4;
}
.white-cell .in-box { box-shadow: inset 2px 2px 0 #a0a0a0, inset -2px -2px 0 #c8c8c8; }
.caret {
  position: absolute;
  left: 3px;
  top: 4px;
  width: 3px;
  height: 12px;
  border-left: 1px dotted #000;
  box-sizing: border-box;
  margin-left: 1px;
}
.caret.big { height: 18px; border-left: 1px solid #000; top: 6px; }

.table-scroll { width: 15px; margin: 2px 0 3px 4px; }

.hscroll {
  height: 14px;
  margin: 2px 22px 0 2px;
  display: flex;
  align-items: center;
  background: var(--green);
  box-shadow: inset 1px 1px 0 var(--hi), inset -1px -1px 0 var(--lo);
}
.htrack { flex: 1; height: 100%; background: var(--dark); position: relative; }
.hthumb {
  position: absolute;
  left: 0;
  top: 1px;
  bottom: 1px;
  width: 650px;
  background: #6fdcbc;
  box-shadow: inset 1px 1px 0 #b8f4e4, inset -1px -1px 0 var(--lo);
}

.nav-row {
  height: 33px;
  margin: 6px 0 0 2px;
  display: flex;
  border-top: 1px solid #000;
  border-bottom: 1px solid #000;
}
.cur-tool {
  width: 40px;
  background: var(--orange);
  font-size: 12px;
  line-height: 31px;
  padding-left: 2px;
  box-sizing: border-box;
  margin-right: 5px;
}
.nav-first { width: 55px; margin-right: 2px; }
.nav-arrow { width: 36px; margin-right: 2px; font-size: 13px; }
.nav-arrow2 { width: 31px; margin-right: 4px; font-size: 13px; }
.nav-last { width: 44px; }
.index-lbl { width: 63px; font-size: 15px; line-height: 31px; padding-left: 4px; box-sizing: border-box; }
.index-in {
  position: relative;
  width: 60px;
  margin: 2px 3px 2px 0;
  box-shadow: inset 2px 2px 0 #2f8a70, inset -2px -2px 0 #a8f0dc;
}
.nav-ico { width: 30px; }
.nav-gap { width: 127px; }
.nav-unit { width: 85px; padding: 0 6px 0 9px; margin-right: 3px; }
.nav-reg { flex: 1; padding: 0 6px 0 9px; margin-right: 2px; }

.merge-row {
  height: 33px;
  margin: 4px 0 0 2px;
  display: flex;
  border-top: 1px solid #000;
  border-bottom: 1px solid #000;
  box-sizing: border-box;
}
.merge-gap { width: 214px; }
.combine { width: 128px; margin-right: 2px; }
.merge-lbl {
  width: 141px;
  background: var(--teal);
  font-size: 15px;
  line-height: 31px;
  padding-left: 11px;
  box-sizing: border-box;
}
.merge-sel { width: 217px; padding: 0 7px 0 12px; margin-right: 2px; }
.merge-btn { flex: 1; margin-right: 2px; }

.action-row { height: 31px; margin-left: 2px; display: flex; gap: 3px; padding: 1px 2px 1px 2px; background: #000; box-sizing: border-box; }
.action { flex: 1; }

.measure { left: 1252px; top: 246px; width: 196px; height: 247px; border-width: 4px; }
.measure .win-title { padding-right: 8px; }
.measure .win-btn { width: 16px; height: 15px; line-height: 15px; font-size: 13px; }
.measure-body { flex: 1; background: var(--green); display: flex; flex-direction: column; padding: 1px 8px 0 0; }
.mode-head {
  height: 17px;
  background: var(--teal);
  text-align: center;
  border: 1px solid #000;
  border-bottom: 0;
  line-height: 17px;
  font-size: 15px;
}
.mode-row {
  height: 27px;
  box-sizing: border-box;
  margin-bottom: 2px;
  padding-left: 6px;
  display: flex;
  align-items: center;
  gap: 8px;
  background: var(--teal);
  box-shadow: 0 0 0 1px #000;
  font-size: 15px;
  white-space: nowrap;
}
.diamond {
  width: 10px;
  height: 10px;
  flex: none;
  transform: rotate(45deg);
  background: var(--teal);
  box-shadow: inset 2px 2px 0 var(--hi), inset -2px -2px 0 #6a9a9a;
}
.diamond.on { background: #d00048; box-shadow: inset 2px 2px 0 #305858, inset -2px -2px 0 #e8fafa; }
.mode-gap { flex: 1; }
.mode-close { height: 28px; box-sizing: border-box; padding: 2px 1px; background: var(--teal); box-shadow: 0 0 0 1px #2f7a66; display: flex; }
.mode-close .btn { flex: 1; }

.notice {
  position: absolute;
  left: 1225px;
  top: 741px;
  width: 215px;
  height: 130px;
  box-sizing: border-box;
  border: 1px solid #c8d4e0;
  background: linear-gradient(#b4c8dc, #d8e2ea);
  display: flex;
  flex-direction: column;
  font-family: "Noto Sans CJK SC", sans-serif;
}
.notice-head {
  height: 24px;
  flex: none;
  display: flex;
  align-items: center;
  gap: 1px;
  padding-left: 6px;
  font-size: 9.500px;
  font-weight: 900;
  color: #222;
}
.notice-body {
  flex: 1;
  margin: 0 2px 2px 2px;
  border: 1px solid #e8f0f6;
  background:
    radial-gradient(140% 60% at 30% 115%, #d8e8f2 0 60%, transparent 61%),
    linear-gradient(#ffffff 0, #f6fafc 35%, #cfe2ee 70%, #a8cbe2 100%);
  color: #8a6a4c;
  font-size: 18px;
}
.notice-l1 { margin: 20px 0 0 18px; letter-spacing: 1.500px; }
.notice-l2 { margin: 6px 0 0 85px; letter-spacing: 1.500px; white-space: nowrap; }
</style>
